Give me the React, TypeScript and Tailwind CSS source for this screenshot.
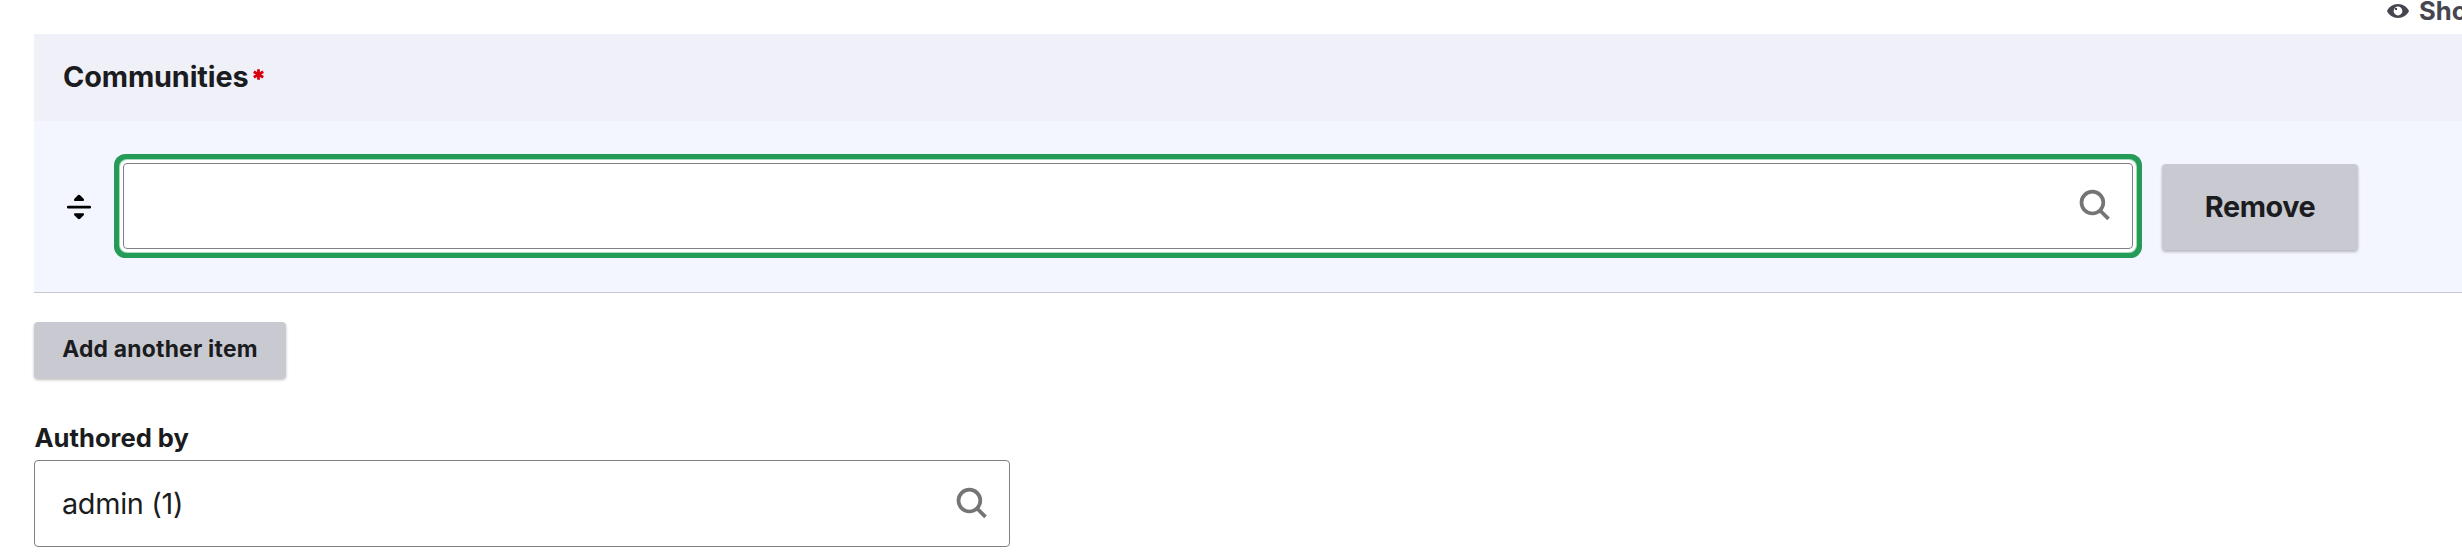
function SearchIcon() {
  return (
    <svg className="block h-8 w-8 shrink-0" viewBox="0 0 32 32" fill="none" stroke="#757575" strokeWidth="3.7">
      <circle cx="13.4" cy="13.6" r="10.9" />
      <path d="M20.8 21.2 L29.5 29.9" />
    </svg>
  );
}

function DragHandle() {
  return (
    <svg className="block h-[26px] w-[26px]" viewBox="0 0 26 26" fill="#000">
      <path d="M11.6 1.5Q13 .1 14.4 1.5L17.4 4.5Q18.6 5.8 17.6 6.9H8.4Q7.4 5.8 8.6 4.5Z" />
      <rect x="1" y="11.7" width="24" height="2.7" rx="1.2" />
      <path d="M11.6 24.6Q13 26 14.4 24.6L17.4 21.6Q18.6 20.3 17.6 19.2H8.4Q7.4 20.3 8.6 21.6Z" />
    </svg>
  );
}

function EyeIcon() {
  return (
    <svg className="block h-[14px] w-[22px]" viewBox="0 0 22 14">
      <path
        fillRule="evenodd"
        fill="#45464f"
        d="M11 0C6 0 1.8 2.9 0 7c1.8 4.1 6 7 11 7s9.2-2.9 11-7C20.2 2.9 16 0 11 0Zm0 11.4a4.4 4.4 0 1 1 0-8.8a4.4 4.4 0 0 1 0 8.8Z"
      />
      <path fill="#45464f" d="M8 4h2v2H8z" />
    </svg>
  );
}

export default function App() {
  return (
    <div className="h-[560px] w-full overflow-hidden bg-white pl-[34px] font-['Inter',sans-serif] text-[#1b1c20]">
      <div className="flex h-[34px] justify-end overflow-hidden">
        <div className="flex w-[75px] items-start whitespace-nowrap">
          <div className="pt-1">
            <EyeIcon />
          </div>
          <span className="-mt-[5px] ml-[10px] text-[25.6px] leading-[31px] font-bold text-[#45464f]">Show row weights</span>
        </div>
      </div>

      <div className="flex h-[87px] items-center bg-[#f0f0f9] pl-[29px]">
        <h4 className="-mt-[2px] text-[28.8px] leading-9 font-bold tracking-[-0.12px]">Communities</h4>
        <svg className="-mt-[7px] ml-1 block h-[11px] w-[11px]" viewBox="0 0 11 11" stroke="#d8000f" strokeWidth="2.8">
          <path d="M5.5 .3V10.7M.8 2.8L10.2 8.2M10.2 2.8L.8 8.2" />
        </svg>
      </div>

      <div className="flex h-[172px] items-start border-b border-[#c6c7d0] bg-[#f3f5ff] pt-[42px]">
        <div className="w-[89px] pt-[31px] pl-[31.5px]">
          <DragHandle />
        </div>
        <div className="flex h-[86px] w-[2010px] items-start justify-end rounded-[4px] border border-[#808087] bg-white pt-[25px] pr-[21px] shadow-[0_0_0_3px_#fff,0_0_0_4px_#a8d9bd,0_0_0_9px_#249c57]">
          <SearchIcon />
        </div>
        <button className="mt-px ml-[29px] h-[86px] w-[196px] rounded-[4px] bg-[#c9c9d2] text-[28.8px] leading-9 font-bold tracking-[-0.45px] shadow-[0_2px_3px_rgba(0,0,0,0.25)]">
          Remove
        </button>
      </div>

      <button className="mt-[29px] block h-[56px] w-[252px] rounded-[4px] bg-[#c9c9d2] pb-[2px] text-[22.8px] leading-7 font-bold tracking-[0.25px] shadow-[0_2px_3px_rgba(0,0,0,0.25)]">
        Add another item
      </button>

      <label className="mt-[43px] block h-[39px] pl-[0.5px] text-[25.6px] leading-[34px] font-bold">Authored by</label>
      <div className="flex h-[87px] w-[976px] items-start justify-between rounded-[4px] border border-[#808087] bg-white pt-[26px] pr-[21px] pl-[27px]">
        <span className="-mt-px text-[28.8px] leading-9 tracking-[-0.3px]">admin (1)</span>
        <SearchIcon />
      </div>
    </div>
  );
}
